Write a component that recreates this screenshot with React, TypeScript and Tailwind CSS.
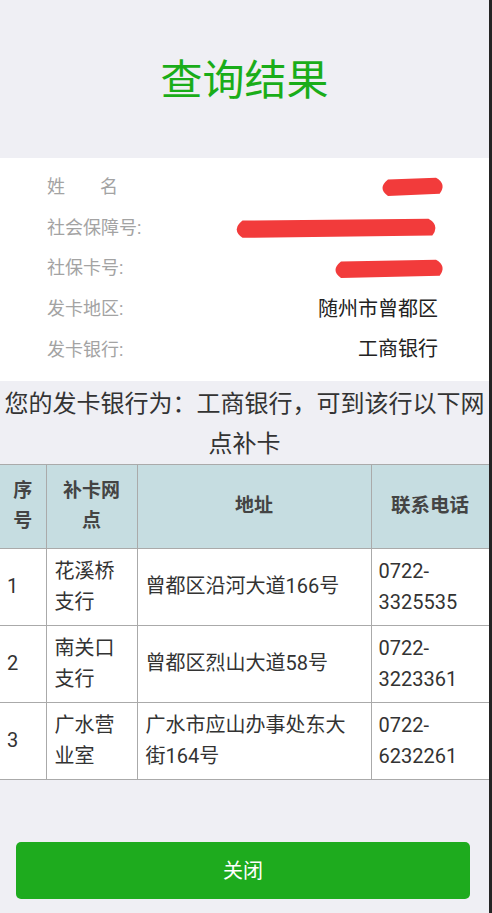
const font = { fontFamily: 'Roboto, "Noto Sans CJK SC", sans-serif' }

type Branch = { no: string; name: string; address: string; phone: string }

const branches: Branch[] = [
  { no: '1', name: '花溪桥支行', address: '曾都区沿河大道166号', phone: '0722-3325535' },
  { no: '2', name: '南关口支行', address: '曾都区烈山大道58号', phone: '0722-3223361' },
  { no: '3', name: '广水营业室', address: '广水市应山办事处东大街164号', phone: '0722-6232261' },
]

// redaction scribble over private values
function Scribble({ w, h, shift = 0 }: { w: number; h: number; shift?: number }) {
  return (
    <svg width={w} height={h} viewBox={`0 0 ${w} ${h}`} className="block" style={{ marginRight: -shift }}>
      <path
        d={`M${h / 2} ${h * 0.2} L${w - h / 2} ${h * 0.12} Q${w} ${h * 0.4} ${w - h / 3} ${h * 0.85} L${h / 2} ${h * 0.95} Q0 ${h * 0.6} ${h / 2} ${h * 0.2} Z`}
        fill="#f23b3b"
      />
    </svg>
  )
}

function InfoRow({ label, children }: { label: React.ReactNode; children?: React.ReactNode }) {
  return (
    <div className="flex h-[40.75px] items-center justify-between">
      <div className="text-[18px] text-[#a3a3a3]">{label}</div>
      <div className="flex items-center text-[20px] text-[#222]">{children}</div>
    </div>
  )
}

export default function App() {
  return (
    <div className="flex min-h-[913px] bg-[#242424]" style={font}>
      <div className="flex w-[489px] shrink-0 flex-col bg-[#efeff4]">
        <div className="flex h-[158px] items-center justify-center pt-[4px]">
          <h1 className="text-[42px] leading-none text-[#1aad19]">查询结果</h1>
        </div>

        <div className="bg-white pb-[11px] pl-[47px] pr-[51px] pt-[8px]">
          <InfoRow label={<span className="flex w-[71px] justify-between"><span>姓</span><span>名</span></span>}>
            <Scribble w={70} h={22} shift={9} />
          </InfoRow>
          <InfoRow label="社会保障号:">
            <Scribble w={209} h={23} shift={2} />
          </InfoRow>
          <InfoRow label="社保卡号:">
            <Scribble w={117} h={22} shift={9} />
          </InfoRow>
          <InfoRow label="发卡地区:">随州市曾都区</InfoRow>
          <InfoRow label="发卡银行:">工商银行</InfoRow>
        </div>

        <p className="-mx-[2px] pt-[3px] text-center text-[24px] leading-[40px] text-[#333]">
          您的发卡银行为：工商银行，可到该行以下网点补卡
        </p>

        <table className="w-[489px] table-fixed border-collapse text-[#333]">
          <colgroup>
            <col className="w-[46px]" />
            <col className="w-[91px]" />
            <col className="w-[234px]" />
            <col className="w-[118px]" />
          </colgroup>
          <thead>
            <tr className="h-[84px] bg-[#c6dde1] text-[19px] font-bold leading-[30px] text-[#444]">
              <th className="border border-l-0 border-[#aaa] px-[8px] align-middle">序号</th>
              <th className="border border-[#aaa] px-[8px] align-middle">补卡网点</th>
              <th className="border border-[#aaa] px-[8px] align-middle">地址</th>
              <th className="border border-[#aaa] px-[4px] align-middle text-[19.5px]">联系电话</th>
            </tr>
          </thead>
          <tbody className="bg-white text-[20px] leading-[31px]">
            {branches.map((b) => (
              <tr key={b.no} className="h-[77px]">
                <td className="border border-l-0 border-[#aaa] px-[7px] align-middle">{b.no}</td>
                <td className="border border-[#aaa] px-[8px] align-middle">{b.name}</td>
                <td className="border border-[#aaa] px-[8px] align-middle">{b.address}</td>
                <td className="border border-[#aaa] px-[7px] align-middle">{b.phone}</td>
              </tr>
            ))}
          </tbody>
        </table>

        <div className="flex flex-1 flex-col justify-end pb-[14px] pl-[16px]">
          <button
            type="button"
            className="h-[57px] w-[454px] rounded-[5px] bg-[#1eab1e] text-[20px] text-white"
          >
            关闭
          </button>
        </div>
      </div>
      <div className="flex-1 bg-[#242424]" />
    </div>
  )
}
